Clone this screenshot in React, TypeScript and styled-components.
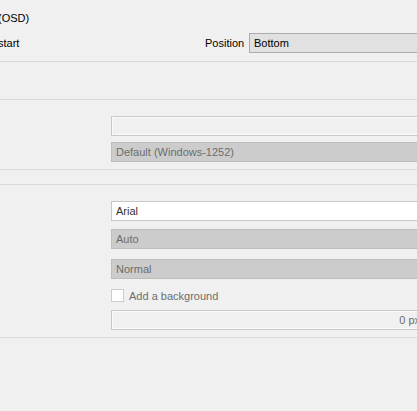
import * as React from 'react';
import { styled, createGlobalStyle } from 'styled-components';

const GlobalStyle = createGlobalStyle`
  html, body {
    margin: 0;
    padding: 0;
    background: #f0f0f0;
  }
  body {
    font-family: 'Liberation Sans', Arial, sans-serif;
    font-size: 11px;
    color: #000;
  }
`;

const Page = styled.div`
  width: 417px;
  height: 411px;
  overflow: hidden;
  background: #f0f0f0;
  display: flex;
  flex-direction: column;
`;

const Section = styled.div<{ $pt?: number; $pb?: number; $h?: number }>`
  display: flex;
  flex-direction: column;
  padding-top: ${(p) => p.$pt ?? 0}px;
  padding-bottom: ${(p) => p.$pb ?? 0}px;
  height: ${(p) => (p.$h ? `${p.$h}px` : 'auto')};
  border-bottom: 1px solid #d9d9d9;
  flex-shrink: 0;
`;

const TopRow = styled.div`
  display: flex;
  align-items: center;
  height: 20px;
  white-space: nowrap;
`;

const CutLabel = styled.span`
  margin-left: -2px;
  width: 207px;
  flex-shrink: 0;
`;

const PositionLabel = styled.span`
  width: 44px;
  flex-shrink: 0;
`;

const FieldColumn = styled.div`
  display: flex;
  flex-direction: column;
  padding-left: 111px;
`;

const Box = styled.div<{ $kind: 'input' | 'white' | 'disabled' | 'combo'; $w?: number; $right?: boolean }>`
  box-sizing: border-box;
  width: ${(p) => p.$w ?? 320}px;
  height: 20px;
  flex-shrink: 0;
  display: flex;
  align-items: center;
  justify-content: ${(p) => (p.$right ? 'flex-end' : 'flex-start')};
  padding: ${(p) => (p.$right ? '0 10px 0 4px' : '0 4px')};
  white-space: nowrap;
  border: 1px solid
    ${(p) => (p.$kind === 'disabled' ? '#bdbdbd' : p.$kind === 'combo' ? '#acacac' : '#c8c8c8')};
  background: ${(p) =>
    p.$kind === 'disabled'
      ? '#cccccc'
      : p.$kind === 'combo'
      ? '#e1e1e1'
      : p.$kind === 'white'
      ? '#ffffff'
      : '#f0f0f0'};
  box-shadow: ${(p) => (p.$kind === 'input' ? 'inset 0 0 0 1px #fafafa' : 'none')};
  color: ${(p) => (p.$kind === 'disabled' || p.$right ? '#6d6d6d' : p.$kind === 'white' ? '#333' : '#000')};
`;

const CheckRow = styled.div`
  display: flex;
  align-items: center;
  gap: 5px;
  height: 13px;
  color: #6d6d6d;
  white-space: nowrap;
`;

const CheckBox = styled.span`
  box-sizing: border-box;
  width: 13px;
  height: 13px;
  border: 1px solid #cccccc;
  background: #ffffff;
  flex-shrink: 0;
`;

const Spacer = styled.div<{ $h: number }>`
  height: ${(p) => p.$h}px;
  flex-shrink: 0;
`;

export default function App() {
  return (
    <Page>
      <GlobalStyle />
      <Section $pt={8} $pb={8}>
        <TopRow>
          <CutLabel>(OSD)</CutLabel>
        </TopRow>
        <Spacer $h={5} />
        <TopRow>
          <CutLabel>start</CutLabel>
          <PositionLabel>Position</PositionLabel>
          <Box $kind="combo" $w={200}>Bottom</Box>
        </TopRow>
      </Section>
      <Section $h={37} />
      <Section $pt={16} $pb={7}>
        <FieldColumn>
          <Box $kind="input" />
          <Spacer $h={6} />
          <Box $kind="disabled">Default (Windows-1252)</Box>
        </FieldColumn>
      </Section>
      <Section $h={14} />
      <Section $pt={16} $pb={7}>
        <FieldColumn>
          <Box $kind="white">Arial</Box>
          <Spacer $h={8} />
          <Box $kind="disabled">Auto</Box>
          <Spacer $h={10} />
          <Box $kind="disabled">Normal</Box>
          <Spacer $h={10} />
          <CheckRow>
            <CheckBox />
            Add a background
          </CheckRow>
          <Spacer $h={8} />
          <Box $kind="input" $right>0 px</Box>
        </FieldColumn>
      </Section>
    </Page>
  );
}
